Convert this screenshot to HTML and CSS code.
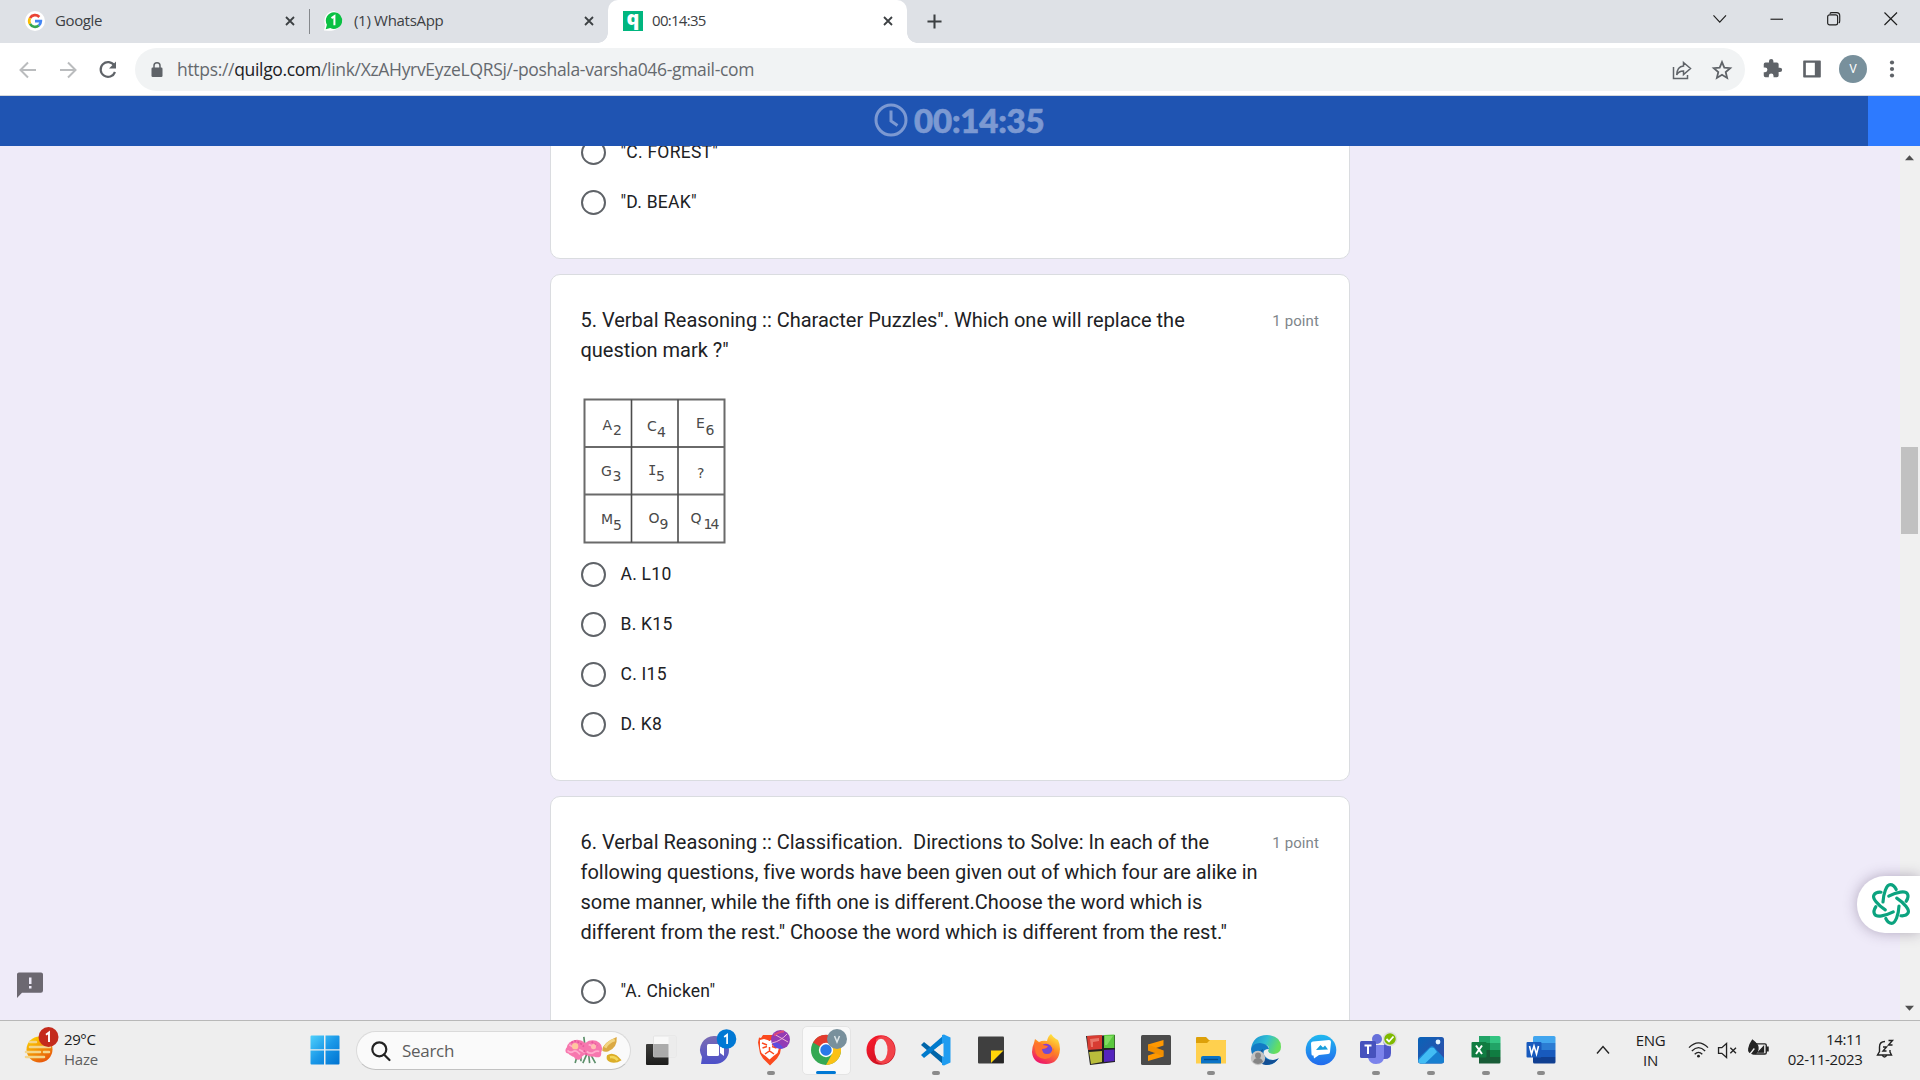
FILE: index.html
```html
<!DOCTYPE html>
<html lang="en">
<head>
<meta charset="utf-8">
<title>00:14:35</title>
<link rel="stylesheet" href="styles.css">
</head>
<body>
<div class="screen">
  <header class="tabs">
    <div class="tab tab-google">
      <svg class="favicon" viewBox="0 0 24 24"><circle cx="12" cy="12" r="12" fill="#fff"/><g fill="none" stroke-width="3.2"><path d="M17.2 7.2A7 7 0 0 0 6 8.500" stroke="#ea4335"/><path d="M6 8.500A7 7 0 0 0 6 15.500" stroke="#fbbc05"/><path d="M6 15.500A7 7 0 0 0 16.600 17.300" stroke="#34a853"/><path d="M12 12.200h7A7 7 0 0 1 16.600 17.300" stroke="#4285f4"/></g></svg>
      <span class="tab-title t-google">Google</span>
      <svg class="close" viewBox="0 0 10 10"><path d="M1 1l8 8M9 1L1 9"/></svg>
    </div>
    <div class="tab-divider"></div>
    <div class="tab tab-whatsapp">
      <svg class="favicon" viewBox="0 0 24 24"><path d="M12 0a12 12 0 0 1 0 23Q8 24 0 23.500L1.500 17A12 12 0 0 1 12 0z" fill="#fff"/><path d="M12 1.500a10 10 0 1 1-4.500 19L2 22l1.500-5.500A10 10 0 0 1 12 1.500z" fill="#0ac143"/><path d="M9 8.500l3.500-2.300V17" fill="none" stroke="#fff" stroke-width="2.400"/></svg>
      <span class="tab-title t-whatsapp">(1) WhatsApp</span>
      <svg class="close" viewBox="0 0 10 10"><path d="M1 1l8 8M9 1L1 9"/></svg>
    </div>
    <div class="tab tab-active">
      <span class="q-icon">q</span>
      <span class="tab-title t-timer">00:14:35</span>
      <svg class="close" viewBox="0 0 10 10"><path d="M1 1l8 8M9 1L1 9"/></svg>
    </div>
    <svg class="new-tab" viewBox="0 0 16 16"><path d="M8 0.500v15M0.500 8h15"/></svg>
    <div class="window-controls">
      <svg viewBox="0 0 14 14"><path d="M0.500 3.500l6.500 7 6.500-7"/></svg>
      <svg viewBox="0 0 14 14"><path d="M0.500 7.500h13"/></svg>
      <svg viewBox="0 0 14 14"><rect x="0.700" y="3" width="10.300" height="10.300" rx="2"/><path d="M3 1.800Q3.400.700 5 .700h5Q13.200.700 13.200 4v5q0 2-1 2.500"/></svg>
      <svg viewBox="0 0 14 14"><path d="M0.500 0.500l13 13M13.500 0.500l-13 13"/></svg>
    </div>
  </header>

  <nav class="toolbar">
    <div class="nav-buttons">
      <svg viewBox="0 0 20 20" class="muted"><path d="M18 10H3M10 2.500L2.500 10l7.500 7.500"/></svg>
      <svg viewBox="0 0 20 20" class="muted"><path d="M2 10h15M10 2.500l7.500 7.500-7.500 7.500"/></svg>
      <svg viewBox="0 0 20 20" class="dark"><path d="M16.300 5.500A7.400 7.400 0 1 0 17 12"/><path d="M18 1.500v7h-7z" class="solid"/></svg>
    </div>
    <div class="omnibox">
      <svg class="lock" viewBox="0 0 12 16"><rect x="0.500" y="5.500" width="11" height="9.500" rx="1.200" fill="#5f6368"/><path d="M3 6V3.800a3 3 0 0 1 6 0V6" fill="none" stroke="#5f6368" stroke-width="1.500"/></svg>
      <span class="url">https://<b>quilgo.com</b>/link/XzAHyrvEyzeLQRSj/-poshala-varsha046-gmail-com</span>
      <svg class="share" viewBox="0 0 20 20"><path d="M1.500 7v11.500h14V15M11.500 2.500l7 6-7 6V11q-5 0-6.800 4Q5 6.500 11.500 6z"/></svg>
      <svg class="star" viewBox="0 0 20 20"><path d="M10 2.200l2.300 5.500 5.900.500-4.500 3.900 1.400 5.800-5.100-3.100-5.100 3.100 1.400-5.800L1.800 8.200l5.900-.500z"/></svg>
    </div>
    <div class="actions">
      <svg class="puzzle" viewBox="0 0 24 24"><path fill="#5f6368" d="M20.500 11H19V7a2 2 0 0 0-2-2h-4V3.500a2.500 2.500 0 0 0-5 0V5H4a2 2 0 0 0-2 2v3.800h1.500a2.700 2.700 0 0 1 0 5.400H2V20a2 2 0 0 0 2 2h3.800v-1.500a2.700 2.700 0 0 1 5.400 0V22H17a2 2 0 0 0 2-2v-4h1.500a2.500 2.500 0 0 0 0-5z"/></svg>
      <svg class="panel" viewBox="0 0 19 19"><path fill="#5f6368" fill-rule="evenodd" d="M1 .500h17a.800.800 0 0 1 .800.800v16.400a.800.800 0 0 1-.800.800H1a.800.800 0 0 1-.800-.800V1.300A.800.800 0 0 1 1 .500zM3 3v13h9.500V3z"/></svg>
      <span class="avatar">V</span>
      <svg class="dots" viewBox="0 0 6 20"><circle cx="3" cy="3.500" r="2.100"/><circle cx="3" cy="10" r="2.100"/><circle cx="3" cy="16.500" r="2.100"/></svg>
    </div>
  </nav>

  <div class="timer-bar">
    <div class="timer">
      <svg viewBox="0 0 34 34"><circle cx="17" cy="17" r="15"/><path d="M17 7.500V18l6.500 4.500"/></svg>
      <span>00:14:35</span>
    </div>
  </div>

  <div class="page">
    <main class="form">
      <section class="card card-first">
        <label class="option"><i></i><span>"C. FOREST"</span></label>
        <label class="option"><i></i><span>"D. BEAK"</span></label>
      </section>
      <section class="card card-5">
        <div class="question">
          <h2 class="q5">5. Verbal Reasoning :: Character Puzzles". Which one will replace the question mark ?"</h2>
          <span class="points">1 point</span>
        </div>
        <svg class="puzzle-grid" viewBox="0 0 144 147">
          <g fill="none" stroke="#6a6a6a" stroke-width="2"><path d="M1.500 2.500h140v143H1.500zM1.500 50h140M1.500 97.500h140"/><path d="M48.500 2.500v143M95 2.500v143" stroke="#4c4c4c" stroke-width="1.600"/></g>
          <g class="grid-text">
            <text x="19.500" y="33">A</text><text x="30" y="38">2</text>
            <text x="64" y="34">C</text><text x="74" y="40">4</text>
            <text x="113" y="31">E</text><text x="122.500" y="38">6</text>
            <text x="18" y="79">G</text><text x="29.500" y="84">3</text>
            <text x="65" y="78" class="serif-i">I</text><text x="73" y="84">5</text>
            <text x="114" y="81">?</text>
            <text x="18" y="127">M</text><text x="30" y="133">5</text>
            <text x="65.500" y="126">O</text><text x="76.500" y="132">9</text>
            <text x="107.500" y="126">Q</text><text x="120.500" y="132" textLength="16">14</text>
          </g>
        </svg>
        <label class="option"><i></i><span>A. L10</span></label>
        <label class="option"><i></i><span>B. K15</span></label>
        <label class="option"><i></i><span>C. I15</span></label>
        <label class="option"><i></i><span>D. K8</span></label>
      </section>
      <section class="card card-6">
        <div class="question">
          <h2 class="q6">6. Verbal Reasoning :: Classification.&nbsp; Directions to Solve: In each of the<br>following questions, five words have been given out of which four are alike in<br>some manner, while the fifth one is different.Choose the word which is<br>different from the rest." Choose the word which is different from the rest."</h2>
          <span class="points">1 point</span>
        </div>
        <label class="option"><i></i><span>"A. Chicken"</span></label>
      </section>
    </main>
    <div class="scrollbar">
      <svg viewBox="0 0 10 6"><path d="M0 5.500L5 0l5 5.500z"/></svg>
      <div class="thumb"></div>
      <svg viewBox="0 0 10 6"><path d="M0 .500h10L5 6z"/></svg>
    </div>
    <svg class="feedback" viewBox="0 0 26 26"><path d="M2.500.500h21A2.300 2.300 0 0 1 26 3v15.500a2.300 2.300 0 0 1-2.500 2.300H5L0 26V3A2.300 2.300 0 0 1 2.500.500z" fill="#6c6871"/><path d="M12 5.500h2.500V12H12zM12 14h2.500v2.600H12z" fill="#efebf9"/></svg>
    <div class="assistant">
      <svg viewBox="-20 -21 40 42"><defs><path id="petal" d="M-8-2C-7.500-11-4.500-19.300-.700-19.300C2.300-19.300 4-17 5.200-14.500"/></defs><use href="#petal"/><use href="#petal" transform="rotate(60)"/><use href="#petal" transform="rotate(120)"/><use href="#petal" transform="rotate(180)"/><use href="#petal" transform="rotate(240)"/><use href="#petal" transform="rotate(300)"/></svg>
    </div>
  </div>

  <footer class="taskbar">
    <div class="weather">
      <svg viewBox="0 0 36 36"><defs><linearGradient id="sun" x1="0" y1="0" x2=".6" y2="1"><stop offset="0" stop-color="#fd0"/><stop offset="1" stop-color="#e8590c"/></linearGradient></defs><circle cx="15.500" cy="21.500" r="13" fill="url(#sun)"/><path d="M6 14h6M6 19h20M2 24h14M20 24h5M2 29h18" stroke="#f3d58c" stroke-width="2.600" stroke-linecap="round"/><circle cx="24.500" cy="9" r="10" fill="#c42b1c"/><path d="M22 6.800l3-2.300V14" fill="none" stroke="#fff" stroke-width="1.900"/></svg>
      <div class="weather-text"><span>29°C</span><span class="haze">Haze</span></div>
    </div>
    <div class="start">
      <svg viewBox="0 0 30 30"><defs><linearGradient id="win" x1="0" y1="0" x2="1" y2="1" gradientUnits="objectBoundingBox"><stop offset="0" stop-color="#4fd0fb"/><stop offset=".5" stop-color="#1a98e8"/><stop offset="1" stop-color="#0072d0"/></linearGradient></defs><path d="M.500 1.500Q.500.500 1.500.500H14v13.700H.500zM15.500.500h13q1 0 1 1v12.700h-14zM.500 15.500H14v14H1.500q-1 0-1-1zM15.500 15.500h14v13q0 1-1 1h-13z" fill="url(#win)"/></svg>
    </div>
    <div class="search">
      <svg class="search-icon" viewBox="0 0 20 20"><circle cx="8.300" cy="8.300" r="7"/><path d="M13 13.500l5.500 5.500"/></svg>
      <span>Search</span>
      <svg class="flowers" viewBox="0 0 58 30"><path d="M19 1l1 8M12 21l-2 7M16 20v6M22 19l-4 9M24 19l1 9M26 19l5 9" stroke="#5c8f6a" stroke-width="1.700" fill="none"/><g fill="#f777ae"><ellipse cx="12" cy="13" rx="11" ry="9"/><ellipse cx="28" cy="13" rx="10" ry="8.500"/><circle cx="3" cy="15" r="3"/><circle cx="13" cy="20" r="4.500"/><circle cx="33" cy="18" r="4"/></g><path d="M2 15q3 3 6 1t7 3M4 9l3 2M14 14l6 3M22 16q4 3 7 1t6-1M24 9l3 1" stroke="#ffaccd" stroke-width="1.800" fill="none"/><path d="M6 7l4-2 5 2 4 4M27 6l6 4M19 15l3 5" stroke="#e7589c" stroke-width="1.800" fill="none" stroke-dasharray="2 1.500"/><circle cx="10" cy="10.500" r="3.300" fill="#ffc79f"/><circle cx="29" cy="11" r="2.600" fill="#ffbdb3"/><path d="M38 15Q38 7 53 1q1 11-9 15-4 1-6-1z" fill="#dba943"/><path d="M41 12q3-6 10-8" stroke="#f3d581" stroke-width="3" fill="none"/><path d="M43 20q7-5 15 5-6 4-12 2-5-2-3-7z" fill="#dcae29"/><path d="M46 22q5-1 8 3" stroke="#f3d85c" stroke-width="2.500" fill="none"/></svg>
    </div>
    <div class="apps">
      <div class="app"><svg viewBox="0 0 32 32"><defs><linearGradient id="tv" x1="0" y1="0" x2="0" y2="1"><stop stop-color="#3c3c3a"/><stop offset="1" stop-color="#1d1d1c"/></linearGradient></defs><rect x="1" y="10" width="22.500" height="21" rx="1" fill="url(#tv)"/><rect x="8.500" y="2" width="22.500" height="21" rx="1" fill="#fff" fill-opacity=".6" stroke="#ddd" stroke-width=".7"/><path d="M23.500 2.500H31v20h-7.500z" fill="#ececec"/><path d="M8.500 10h15v13h-15z" fill="#aaa" fill-opacity=".7"/></svg></div>
      <div class="app"><svg viewBox="0 0 36 36"><defs><linearGradient id="chat" x1="0" y1="0" x2="0" y2="1"><stop stop-color="#7b6cb3"/><stop offset="1" stop-color="#4c50c9"/></linearGradient></defs><path d="M17 6a14 14 0 1 1 0 28H3l1-7A14 14 0 0 1 17 6z" fill="url(#chat)"/><rect x="9" y="14" width="12" height="12" rx="1.500" fill="#fff"/><path d="M22 17l4-3v12l-4-3z" fill="#fff"/><circle cx="28.500" cy="9" r="9.800" fill="#0078d4"/><path d="M26.200 7l2.900-2.300V14" fill="none" stroke="#fff" stroke-width="1.700"/></svg></div>
      <div class="app"><svg viewBox="0 0 36 36"><path d="M10 5h13l2 3 3-.500 1 5-2 11-3 5-7 7-7-7-3-5-2-11 1-5 2 .500z" fill="#fb4a1f"/><path d="M7 10l4-1 5 1.500L22 9l5 2-1 7-1.500 5-4 3-4 3.500-4-3.500-4-3-1.500-5z" fill="#fff"/><path d="M9 13l5 2M24 13l-5 2M9.500 18l4.500-1.500M23.500 18L19 16.500M16.500 8v3M12 24l4.500-3 4.500 3M16.500 17v4" stroke="#fb4a1f" stroke-width="1.500" fill="none"/><circle cx="27.500" cy="9.500" r="9.500" fill="#933bb5"/><path d="M18.500 12q7-1 12 6a9.500 9.500 0 0 1-12-6z" fill="#5d4de0"/><path d="M21 4l14 8M19 13q9-2 15-9" stroke="#eeb1d4" fill="none"/><path d="M21 5.500q5-4 10-4" stroke="#dc477c" stroke-width="2" fill="none"/></svg><b></b></div>
      <div class="app active"><svg viewBox="0 0 36 36"><circle cx="18" cy="20" r="15" fill="#34a853"/><path d="M18 20L5 12.500a15 15 0 0 1 26-.500q2 1 1 2H18z" fill="#e33b2e"/><path d="M18 14h13.800A15 15 0 0 1 18 35l6-11z" fill="#fbc116"/><circle cx="18" cy="20" r="7.200" fill="#fff"/><circle cx="18" cy="20" r="5.700" fill="#2979e8"/><circle cx="29" cy="9" r="10" fill="#78909c"/><path d="M26.500 6l2.500 6 2.500-6" fill="none" stroke="#dbe4e7" stroke-width="1.500"/></svg><b></b></div>
      <div class="app"><svg viewBox="0 0 32 32"><defs><linearGradient id="op" x1="0" y1="0" x2="1" y2="1"><stop stop-color="#ff1b2d"/><stop offset="1" stop-color="#b70d1c"/></linearGradient></defs><ellipse cx="16" cy="16" rx="14.500" ry="14.700" fill="url(#op)"/><path d="M11 5q7-6 14 0 5 5 5 11t-5 11q-7 6-14 0z" fill="#f24249"/><ellipse cx="16" cy="16" rx="6.500" ry="11.300" fill="#eee"/></svg></div>
      <div class="app"><svg viewBox="0 0 32 32"><path d="M1 11l3-3 20 16v7z" fill="#0065a9"/><path d="M1 21l3 3L24 8V1z" fill="#007acc"/><path d="M22 1l2-.500 6.500 3V28.500L24 31.500 22 31z" fill="#1f9cf0"/><path d="M23.500 9v14L14 16z" fill="#eee"/></svg><b></b></div>
      <div class="app"><svg viewBox="0 0 32 32"><rect x="3" y="2.500" width="26" height="27" rx="1" fill="#3f3f3f"/><path d="M16 16.500h12.500L16 29z" fill="#ffd60a"/><path d="M28.500 17v12H16.500z" fill="#252525"/></svg></div>
      <div class="app"><svg viewBox="0 0 32 32"><defs><linearGradient id="ff" x1=".8" y1="0" x2=".3" y2="1"><stop stop-color="#fff044"/><stop offset=".45" stop-color="#ff8a23"/><stop offset="1" stop-color="#ed126c"/></linearGradient></defs><path d="M4 9l1-4 4 3q4-2 8-1 1-5 4-7 2 3 5 5l2 1q2 4 2 9-1 15-14 15T2 18q0-5 2-9z" fill="url(#ff)"/><circle cx="16" cy="16" r="6.300" fill="#8838d1"/><path d="M4 9q7-1 9 2l5 1q-1 3-6 3 1 4 5 4t7-5q0 11-9 11Q5 24 5 15z" fill="#ff732d"/><path d="M12.500 15q-.500 5 4.500 5t5-5q-1-4-5-4l2 2.500q-1 1.500-6.500 1.500z" fill="#714ad4"/></svg></div>
      <div class="app"><svg viewBox="0 0 32 32"><path d="M1 2l29-1v27L5 31z" fill="#222"/><path d="M2 2l15-1v14L3 16z" fill="#d83c32"/><path d="M19 1l10.500-.500V14H19z" fill="#5ac83e"/><path d="M4 18l13-1v11L6 30z" fill="#b9bd3b"/><path d="M19 16l10.500-.500V27L19 28z" fill="#5424bd"/><path d="M5 5l9-1v3L8 8v5H6z" fill="#f18d7f" fill-opacity=".7"/><path d="M20 2h8l-6 9h-2z" fill="#9de879" fill-opacity=".6"/></svg></div>
      <div class="app"><svg viewBox="0 0 32 32"><rect x="1" y="1" width="30" height="30" rx="1.500" fill="#4b4b4b"/><path d="M8 10.500L23.500 6v5.500L16 14l7.500 2.500v6L8 27v-5.500l7.500-2.500L8 16.500z" fill="#ff9800"/><path d="M8 10.500v6l15.500 6v-6z" fill="#e98900" fill-opacity=".6"/></svg></div>
      <div class="app"><svg viewBox="0 0 32 32"><path d="M1 4q0-1 1-1h9l3 3h16q1 0 1 1v8H1z" fill="#dda009"/><path d="M1 9h11l3-3h15q1 0 1 1v22.500H1z" fill="#ffd04e"/><path d="M6 29.500V24q0-2 2-2h16q2 0 2 2v5.500z" fill="#0b73c6"/><path d="M9 25.500h14" stroke="#064c89" stroke-width="1.300"/></svg><b></b></div>
      <div class="app"><svg viewBox="0 0 32 32"><defs><linearGradient id="eg" x1="0" y1="0" x2="1" y2=".3"><stop stop-color="#168bd2"/><stop offset=".55" stop-color="#30bed2"/><stop offset="1" stop-color="#67df5d"/></linearGradient></defs><path d="M1 15Q3 1 17 1q14 1 14 12 0 6-7 7-5 0-6-3 3-6-4-6-7 0-13 4z" fill="url(#eg)"/><path d="M1 15q2-6 9-6 8 1 9 6-7 0-5 6 5 7 14 4-4 6-11 6Q2 29 1 15z" fill="#127ac4"/><path d="M13 15q-3 8 6 11 5 1 10-2-5 7-13 7-8-1-7-8 0-6 4-8z" fill="#134f94"/><circle cx="8" cy="24" r="7.200" fill="#c4c4c4"/><circle cx="8" cy="21.500" r="3" fill="#858585"/><path d="M3 28q1-4 5-4t5 4q-5 4-10 0z" fill="#858585"/></svg></div>
      <div class="app"><svg viewBox="0 0 32 32"><defs><linearGradient id="ms" x1="0" y1="0" x2="0" y2="1"><stop stop-color="#20b8ef"/><stop offset="1" stop-color="#2269ed"/></linearGradient></defs><circle cx="16" cy="16" r="15.300" fill="url(#ms)"/><path d="M8 7.500L24 6q2 0 2 2l-1 10q0 2-2 2l-9 1-5 3.500-.500-3Q6.500 22 6.500 20L6 9.500q0-2 2-2z" fill="#fff"/><path d="M11 16l4.500-5 2.500 2.500 2-2 3 4z" fill="#199edc"/></svg></div>
      <div class="app"><svg viewBox="0 0 36 36"><circle cx="19" cy="9" r="5" fill="#6670da"/><circle cx="29" cy="12" r="3.500" fill="#5059c9"/><path d="M25 15h7q1 0 1 1v7q0 6-6 6h-2z" fill="#5059c9"/><path d="M11 15h15v11q0 8-8 8-6 0-8-6z" fill="#7b83eb"/><rect x="2" y="11" width="16" height="17" rx="1.500" fill="#4652bd"/><path d="M6.500 15.500h7M10 15.500V24" stroke="#fff" stroke-width="2" fill="none"/><circle cx="32" cy="9" r="6.500" fill="#7fba00" stroke="#ddd" stroke-width="1.500"/><path d="M28.500 9l2.500 2.500 4.500-5" stroke="#fff" stroke-width="1.800" fill="none"/></svg><b></b></div>
      <div class="app"><svg viewBox="0 0 32 32"><defs><linearGradient id="ph" x1="0" y1="0" x2="1" y2="1"><stop stop-color="#0963b8"/><stop offset="1" stop-color="#354da8"/></linearGradient></defs><rect x="3" y="3" width="26" height="26.500" rx="2.500" fill="url(#ph)"/><path d="M3.500 24L15 13q2-2 4 0l10 11v3q0 2.500-3 2.500H6q-3 0-2.500-5z" fill="#177fd0"/><path d="M3.500 26L15 14q2-1 4 0L22 18 10 29.500H6q-3 0-2.500-3.500z" fill="#42bdf4"/><circle cx="23" cy="8" r="2.400" fill="#e4f4ff"/></svg><b></b></div>
      <div class="app"><svg viewBox="0 0 32 32"><path d="M9 2h11v14H9z" fill="#21a366"/><path d="M20 2h9q1.500 0 1.500 1.500V9H20z" fill="#33c481"/><path d="M9 9h11v7H9z" fill="#107c41"/><path d="M20 9h10.500v7H20z" fill="#21a366"/><path d="M9 16h11v7H9z" fill="#185c37"/><path d="M20 16h10.500v7H20z" fill="#107c41"/><path d="M9 23h21.500v5q0 1.500-1.500 1.500H9z" fill="#185c37"/><rect x="1.500" y="8" width="15" height="15.500" rx="1" fill="#107c41"/><path d="M6 11.500l6 8.500M12 11.500L6 20" stroke="#fff" stroke-width="2"/></svg><b></b></div>
      <div class="app"><svg viewBox="0 0 32 32"><path d="M8 3.500Q8 2 9.500 2H29q1.500 0 1.500 1.500V9H8z" fill="#41a5ee"/><path d="M8 9h22.500v7H8z" fill="#2b7cd3"/><path d="M8 16h22.500v7H8z" fill="#185abd"/><path d="M8 23h22.500v5q0 1.500-1.500 1.500H9.500Q8 29.500 8 28z" fill="#103f91"/><rect x="1.500" y="8" width="15" height="15.500" rx="1" fill="#185abd"/><path d="M4.500 12l2 8 2.500-8 2.500 8 2-8" stroke="#fff" stroke-width="1.600" fill="none"/></svg><b></b></div>
    </div>
    <div class="tray">
      <svg class="up" viewBox="0 0 14 10"><path d="M1 8.500l6-7 6 7"/></svg>
      <div class="lang"><span>ENG</span><span>IN</span></div>
      <svg class="wifi" viewBox="0 0 22 20"><path d="M1 8q10-10 20 0M4 11.500q7-7 14 0M7 15q4-4 8 0"/><circle cx="11" cy="17" r="1.500" fill="#222" stroke="none"/></svg>
      <svg class="volume" viewBox="0 0 22 18"><path d="M1.500 6v6H5l5 4.500V1.500L5 6zM14 6l6 6M20 6l-6 6"/></svg>
      <svg class="battery" viewBox="0 0 24 20"><path d="M7 5h12.500q1.500 0 1.500 1.500v8q0 1.500-1.500 1.500H8" stroke="#222" fill="none" stroke-width="1.500"/><path d="M21.500 8.500H23v4h-1.500zM12.500 14l5.500-6v6z" fill="#222"/><path d="M6 1q7 5 6 10-1 5-5 5-6-1-5-6Q3 5 6 1z" fill="#222"/><path d="M1 19l7-9" stroke="#eee"/></svg>
      <div class="clock"><span>14:11</span><span>02-11-2023</span></div>
      <svg class="bell" viewBox="0 0 18 20"><path d="M9 2.500Q3.500 2.500 3.500 8v4.500L1.500 16h14l-1.500-3v-2M6 16q2.500 4 5 0M7 8h3.500L7 12h3.500M12.500 1.500h4l-4 4.500h4"/></svg>
    </div>
  </footer>
</div>
</body>
</html>
```

FILE: styles.css
```css
* { box-sizing: border-box; }
body { margin: 0; }
svg { display: block; flex: none; overflow: visible; }
.screen {
  width: 1920px; height: 1080px; overflow: hidden;
  display: flex; flex-direction: column;
  font-family: "Open Sans", sans-serif;
  background: #efebf9;
}

/* Tab strip */
.tabs { flex: none; height: 43px; display: flex; align-items: center; background: #dee1e6; color: #3c4043; }
.tab { display: flex; align-items: center; height: 43px; padding-bottom: 1px; white-space: nowrap; }
.tab-google { width: 309px; padding-left: 25px; }
.tab-whatsapp { width: 298px; padding-left: 14px; }
.tab-active {
  position: relative; width: 299px; padding-left: 15px;
  background: #fff; border-radius: 10px 10px 0 0;
}
.tab-active::before, .tab-active::after {
  content: ""; position: absolute; bottom: 0; width: 10px; height: 10px;
}
.tab-active::before { left: -10px; background: radial-gradient(circle at 0 0, transparent 9.5px, #fff 10px); }
.tab-active::after { right: -10px; background: radial-gradient(circle at 100% 0, transparent 9.5px, #fff 10px); }
.favicon { width: 20px; height: 20px; margin-right: 10px; }
.tab-title { font-size: 15px; line-height: 20px; margin-top: -2px; }
.t-google { letter-spacing: -0.4px; }
.t-whatsapp { letter-spacing: -0.3px; }
.t-timer { letter-spacing: -0.7px; }
.close { width: 10px; height: 10px; margin-left: auto; margin-right: 14px; fill: none; stroke: #3c4043; stroke-width: 1.8; }
.tab-divider { width: 1px; height: 25px; background: #85888c; }
.q-icon {
  width: 20px; height: 20px; margin-right: 9px; background: #00b67f; color: #fff;
  font-size: 20px; font-weight: 800; line-height: 14px; text-align: center;
}
.new-tab { width: 15px; height: 15px; margin-left: 20px; stroke: #3c4043; stroke-width: 2.2; }
.window-controls { display: flex; gap: 43.5px; margin-left: auto; margin-right: 23px; margin-bottom: 6px; }
.window-controls svg { width: 13.500px; height: 13.500px; fill: none; stroke: #1f1f1f; stroke-width: 1.2; }

/* Address bar */
.toolbar { flex: none; height: 53px; display: flex; background: #fff; border-bottom: 1px solid #d5d8dc; padding-top: 5px; }
.nav-buttons { width: 135px; height: 43px; display: flex; align-items: center; gap: 20px; padding-left: 18px; }
.nav-buttons svg { width: 20px; height: 20px; fill: none; stroke-width: 2; }
.nav-buttons .muted { stroke: #babcbe; }
.nav-buttons .dark { stroke: #5f6368; stroke-width: 2.2; }
.nav-buttons .solid { fill: #5f6368; stroke: none; }
.omnibox { width: 1610px; height: 43px; border-radius: 22px; background: #f1f3f4; display: flex; align-items: center; padding: 0 13px 0 16px; }
.lock { width: 12px; height: 16px; margin-right: 14px; }
.url { font-size: 17.5px; letter-spacing: -0.32px; color: #65696e; white-space: nowrap; margin-top: -1px; }
.url b { font-weight: 400; color: #202124; }
.share, .star { width: 20px; height: 20px; fill: none; stroke: #5f6368; stroke-width: 1.5; }
.share { margin-left: auto; }
.star { margin-left: 20px; stroke-width: 1.8; }
.actions { flex: 1; height: 43px; display: flex; align-items: center; padding-left: 17px; }
.puzzle { width: 21px; height: 21px; margin-top: -2px; }
.panel { width: 18px; height: 18px; margin-left: 20px; margin-top: -2px; }
.avatar { width: 28px; height: 28px; border-radius: 50%; margin-left: 18px; margin-top: -1px; background: #78909c; color: #fff; font: 12px/28px Roboto, sans-serif; text-align: center; }
.dots { width: 6px; height: 20px; margin-left: 22px; margin-top: -1px; fill: #5f6368; }

/* Countdown */
.timer-bar { flex: none; height: 50px; display: flex; background: linear-gradient(90deg, #1f54b2 1868px, #2d7aff 1868px); }
.timer { display: flex; align-items: center; height: 48px; margin-left: 874px; color: #7c99d2; font: 900 33px/48px Lato, sans-serif; letter-spacing: -0.2px; }
.timer span { -webkit-text-stroke: 0.7px #7c99d2; }
.timer svg { width: 34px; height: 34px; fill: none; stroke: #7c99d2; stroke-width: 3; margin-right: 6px; }

/* Form */
.page { flex: 1; min-height: 0; position: relative; display: flex; overflow: hidden; font-family: Roboto, sans-serif; }
.form { width: 800px; margin-left: 550px; margin-top: -20px; display: flex; flex-direction: column; gap: 15px; }
.card { flex: none; background: #fff; border: 1px solid #dadce0; border-radius: 10px; padding: 30px 30px 30px 29.5px; }
.card-first { padding-top: 0; height: 133px; }
.card-5 { height: 507px; }
.card-6 { height: 300px; }
.question { display: flex; justify-content: space-between; }
.question h2 { margin: 0; font-size: 20px; font-weight: 400; line-height: 30px; letter-spacing: -0.01px; color: #202124; white-space: nowrap; }
.question .q5 { width: 640px; white-space: normal; }
.points { font-size: 15px; line-height: 32px; letter-spacing: 0.1px; color: #80868b; }
.option { height: 50px; display: flex; align-items: center; }
.option i { width: 25px; height: 25px; border: 2.5px solid #5f6368; border-radius: 50%; }
.option span { margin-left: 15px; margin-top: 1px; font-size: 17.5px; line-height: 25px; letter-spacing: 0.25px; color: #202124; }
.puzzle-grid { width: 144px; height: 147px; margin: 32px 0 5px 2.5px; }
.grid-text { font: 14px "DejaVu Sans", sans-serif; fill: #4a4a4a; }
.serif-i { font-family: "DejaVu Sans Mono", monospace; }
.card-6 .option { margin-top: 19px; }

.scrollbar { width: 20px; margin-left: auto; background: #f0f0f0; display: flex; flex-direction: column; align-items: center; padding: 9px 2px 9px 0; }
.scrollbar svg { width: 9px; height: 6px; fill: #505050; }
.thumb { width: 17px; height: 87px; margin-top: 286px; margin-bottom: auto; background: #c1c1c1; }
.feedback { position: absolute; left: 17px; bottom: 22px; width: 26px; height: 26px; }
.assistant {
  position: absolute; right: 0; top: 730px; width: 63px; height: 57px;
  padding: 7px 0 0 14px; background: #fff; border-radius: 28px 0 0 28px;
  box-shadow: 0 0 14px rgba(60, 40, 80, 0.35);
}
.assistant svg { width: 40px; height: 42px; fill: none; stroke: #0ba37f; stroke-width: 3.2; stroke-linecap: round; }

/* Taskbar */
.taskbar { flex: none; height: 60px; border-top: 1px solid #b8b8b8; background: #eee; display: flex; color: #1c1c1c; font-size: 15px; line-height: 20px; }
.weather { width: 296px; display: flex; padding: 7px 0 0 24px; }
.weather svg { width: 36px; height: 36px; }
.weather-text { display: flex; flex-direction: column; margin-left: 4px; margin-top: 1px; letter-spacing: -0.4px; }
.haze { color: #5f5f5f; letter-spacing: -0.2px; }
.start { width: 60px; padding: 14px 0 0 13.5px; }
.start svg { width: 30px; height: 30px; }
.search { width: 275px; height: 39px; margin-top: 10px; margin-right: 2.5px; border-radius: 20px; background: #fafafa; border: 1px solid #dadada; border-bottom-color: #c2c2c2; display: flex; align-items: center; padding: 0 8px 0 14px; color: #5d5d5d; }
.search span { font-size: 17px; margin-left: 11px; letter-spacing: -0.3px; }
.search-icon { width: 20px; height: 20px; fill: none; stroke: #222; stroke-width: 2.2; stroke-linecap: round; }
.flowers { width: 57px; height: 29px; margin-left: auto; }
.apps { display: flex; width: 935px; }
.app { width: 55px; height: 58px; display: flex; flex-direction: column; align-items: center; }
.app svg { height: 32px; width: 32px; margin-top: 13px; }
.app svg[viewBox="0 0 36 36"] { width: 36px; height: 36px; margin-top: 9px; }
.app b { width: 8px; height: 4px; border-radius: 2px; background: #8a8a8a; margin-top: 5px; }
.app.active { width: 49px; height: 49px; margin: 5px 3px 0; background: #f9f9f9; border: 1px solid #e4e4e4; border-radius: 5px; }
.app.active svg[viewBox="0 0 36 36"] { margin-top: 3px; }
.app.active b { width: 20px; background: #0078d4; }
.tray { display: flex; position: relative; padding-left: 27px; align-items: flex-start; }
.tray > svg { fill: none; stroke: #222; stroke-width: 1.4; }
.up { width: 14px; height: 10px; margin-top: 24px; }
.lang, .clock { display: flex; flex-direction: column; margin-top: 9px; }
.clock { margin-top: 8px; }
.lang { align-items: center; width: 40px; margin-left: 21px; letter-spacing: -0.3px; }
.wifi { width: 21px; height: 19px; margin: 19px 0 0 17px; }
.volume { width: 21px; height: 17px; margin: 21px 0 0 8px; }
.battery { width: 22px; height: 19px; margin: 18px 0 0 9px; }
.clock { width: 84px; margin-left: 10px; align-items: flex-end; letter-spacing: -0.35px; white-space: nowrap; }
.bell { width: 18px; height: 20px; margin: 18px 0 0 13px; }
```
